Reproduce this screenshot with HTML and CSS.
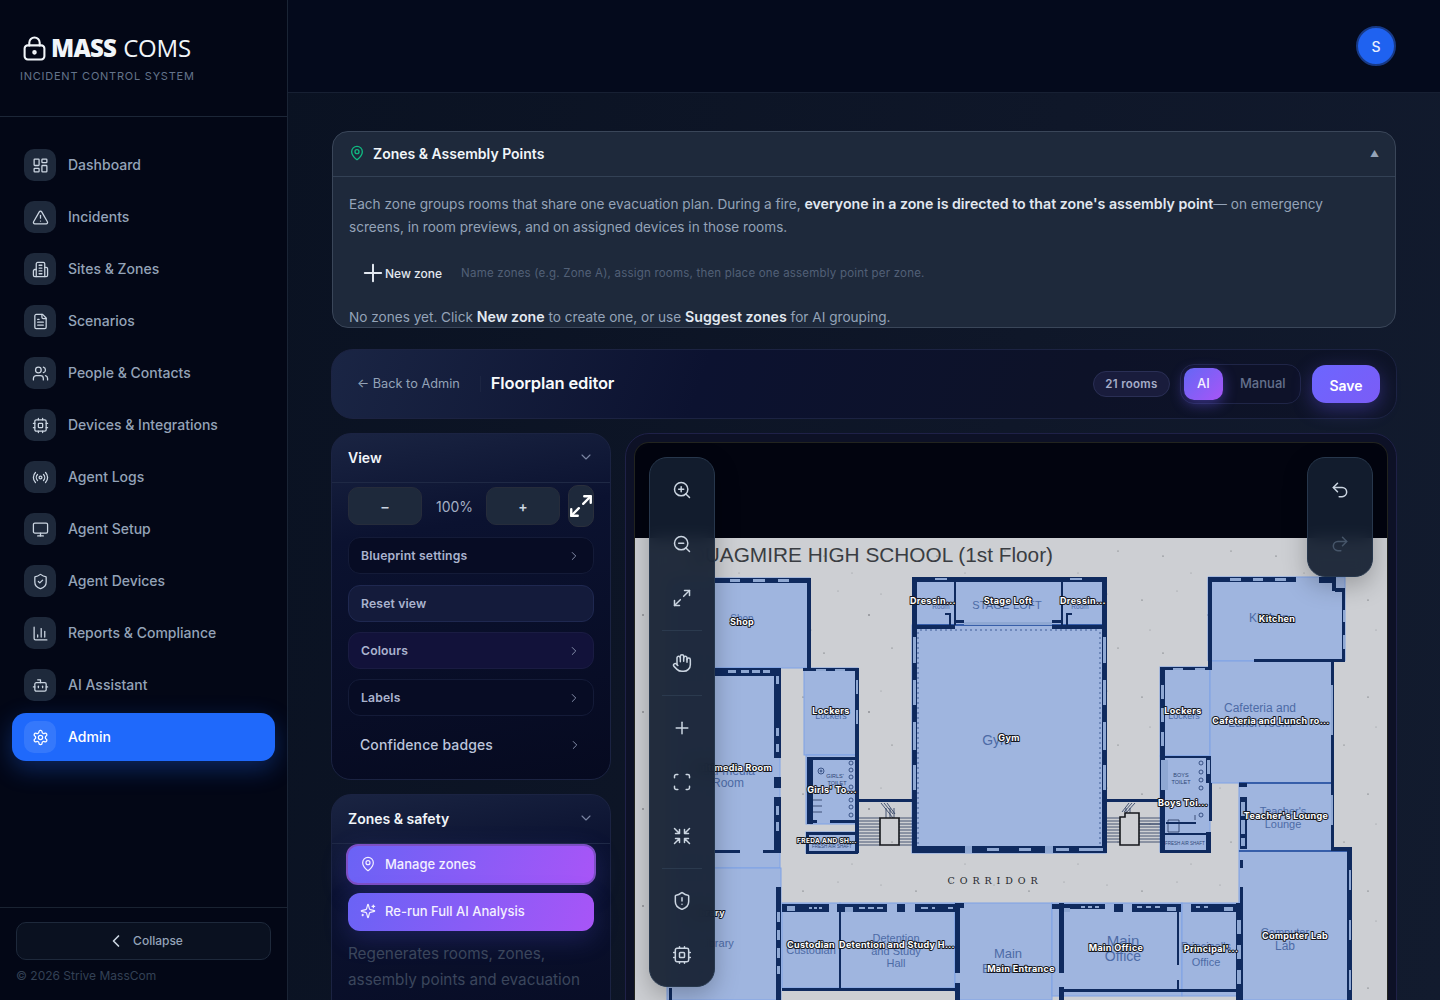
FILE: index.html
```html
<!DOCTYPE html>
<html lang="en">
<head>
<meta charset="utf-8">
<title>Floorplan editor</title>
<link rel="stylesheet" href="styles.css">
</head>
<body>
<svg class="sprite" aria-hidden="true">
<symbol id="i-dash" viewBox="0 0 24 24"><rect x="3" y="3" width="7" height="9" rx="1"/><rect x="14" y="3" width="7" height="5" rx="1"/><rect x="14" y="12" width="7" height="9" rx="1"/><rect x="3" y="16" width="7" height="5" rx="1"/></symbol>
<symbol id="i-alert" viewBox="0 0 24 24"><path d="m21.73 18-8-14a2 2 0 0 0-3.48 0l-8 14A2 2 0 0 0 4 21h16a2 2 0 0 0 1.73-3"/><path d="M12 9v4"/><path d="M12 17h.01"/></symbol>
<symbol id="i-build" viewBox="0 0 24 24"><path d="M6 22V4a2 2 0 0 1 2-2h8a2 2 0 0 1 2 2v18Z"/><path d="M6 12H4a2 2 0 0 0-2 2v6a2 2 0 0 0 2 2h2"/><path d="M18 9h2a2 2 0 0 1 2 2v9a2 2 0 0 1-2 2h-2"/><path d="M10 6h4"/><path d="M10 10h4"/><path d="M10 14h4"/><path d="M10 18h4"/></symbol>
<symbol id="i-file" viewBox="0 0 24 24"><path d="M15 2H6a2 2 0 0 0-2 2v16a2 2 0 0 0 2 2h12a2 2 0 0 0 2-2V7Z"/><path d="M14 2v4a2 2 0 0 0 2 2h4"/><path d="M10 9H8"/><path d="M16 13H8"/><path d="M16 17H8"/></symbol>
<symbol id="i-users" viewBox="0 0 24 24"><path d="M16 21v-2a4 4 0 0 0-4-4H6a4 4 0 0 0-4 4v2"/><circle cx="9" cy="7" r="4"/><path d="M22 21v-2a4 4 0 0 0-3-3.87"/><path d="M16 3.13a4 4 0 0 1 0 7.75"/></symbol>
<symbol id="i-cpu" viewBox="0 0 24 24"><rect x="4" y="4" width="16" height="16" rx="2"/><rect x="9" y="9" width="6" height="6" rx="1"/><path d="M15 2v2M15 20v2M2 15h2M2 9h2M20 15h2M20 9h2M9 2v2M9 20v2"/></symbol>
<symbol id="i-radio" viewBox="0 0 24 24"><path d="M4.9 19.1C1 15.2 1 8.8 4.9 4.9"/><path d="M7.8 16.2c-2.3-2.3-2.3-6.1 0-8.5"/><circle cx="12" cy="12" r="2"/><path d="M16.2 7.8c2.3 2.3 2.3 6.1 0 8.5"/><path d="M19.1 4.9C23 8.8 23 15.1 19.1 19"/></symbol>
<symbol id="i-monitor" viewBox="0 0 24 24"><rect x="2" y="3" width="20" height="14" rx="2"/><path d="M8 21h8"/><path d="M12 17v4"/></symbol>
<symbol id="i-shieldc" viewBox="0 0 24 24"><path d="M20 13c0 5-3.5 7.5-7.66 8.95a1 1 0 0 1-.67-.01C7.5 20.5 4 18 4 13V6a1 1 0 0 1 1-1c2 0 4.5-1.2 6.24-2.72a1.17 1.17 0 0 1 1.52 0C14.51 3.81 17 5 19 5a1 1 0 0 1 1 1z"/><path d="m9 12 2 2 4-4"/></symbol>
<symbol id="i-shielda" viewBox="0 0 24 24"><path d="M20 13c0 5-3.5 7.5-7.66 8.95a1 1 0 0 1-.67-.01C7.5 20.5 4 18 4 13V6a1 1 0 0 1 1-1c2 0 4.5-1.2 6.24-2.72a1.17 1.17 0 0 1 1.52 0C14.51 3.81 17 5 19 5a1 1 0 0 1 1 1z"/><path d="M12 8v4"/><path d="M12 16h.01"/></symbol>
<symbol id="i-chart" viewBox="0 0 24 24"><path d="M3 3v16a2 2 0 0 0 2 2h16"/><path d="M18 17V9"/><path d="M13 17V5"/><path d="M8 17v-3"/></symbol>
<symbol id="i-bot" viewBox="0 0 24 24"><path d="M12 8V4H8"/><rect x="4" y="8" width="16" height="12" rx="2"/><path d="M2 14h2"/><path d="M20 14h2"/><path d="M15 13v2"/><path d="M9 13v2"/></symbol>
<symbol id="i-gear" viewBox="0 0 24 24"><path d="M12.22 2h-.44a2 2 0 0 0-2 2v.18a2 2 0 0 1-1 1.73l-.43.25a2 2 0 0 1-2 0l-.15-.08a2 2 0 0 0-2.73.73l-.22.38a2 2 0 0 0 .73 2.73l.15.1a2 2 0 0 1 1 1.72v.51a2 2 0 0 1-1 1.74l-.15.09a2 2 0 0 0-.73 2.73l.22.38a2 2 0 0 0 2.73.73l.15-.08a2 2 0 0 1 2 0l.43.25a2 2 0 0 1 1 1.73V20a2 2 0 0 0 2 2h.44a2 2 0 0 0 2-2v-.18a2 2 0 0 1 1-1.73l.43-.25a2 2 0 0 1 2 0l.15.08a2 2 0 0 0 2.73-.73l.22-.39a2 2 0 0 0-.73-2.73l-.15-.08a2 2 0 0 1-1-1.74v-.5a2 2 0 0 1 1-1.74l.15-.09a2 2 0 0 0 .73-2.73l-.22-.38a2 2 0 0 0-2.73-.73l-.15.08a2 2 0 0 1-2 0l-.43-.25a2 2 0 0 1-1-1.73V4a2 2 0 0 0-2-2z"/><circle cx="12" cy="12" r="3"/></symbol>
<symbol id="i-pin" viewBox="0 0 24 24"><path d="M20 10c0 4.993-5.539 10.193-7.399 11.799a1 1 0 0 1-1.202 0C9.539 20.193 4 14.993 4 10a8 8 0 0 1 16 0"/><circle cx="12" cy="10" r="3"/></symbol>
<symbol id="i-plus" viewBox="0 0 24 24"><path d="M5 12h14"/><path d="M12 5v14"/></symbol>
<symbol id="i-expand" viewBox="0 0 24 24"><path d="M15 3h6v6"/><path d="m21 3-7 7"/><path d="m3 21 7-7"/><path d="M9 21H3v-6"/></symbol>
<symbol id="i-spark" viewBox="0 0 24 24"><path d="M9.937 15.5A2 2 0 0 0 8.5 14.063l-6.135-1.582a.5.5 0 0 1 0-.962L8.5 9.936A2 2 0 0 0 9.937 8.5l1.582-6.135a.5.5 0 0 1 .963 0L14.063 8.5A2 2 0 0 0 15.5 9.937l6.135 1.581a.5.5 0 0 1 0 .964L15.5 14.063a2 2 0 0 0-1.437 1.437l-1.582 6.135a.5.5 0 0 1-.963 0z"/><path d="M20 3v4"/><path d="M22 5h-4"/><path d="M4 17v2"/><path d="M5 18H3"/></symbol>
<symbol id="i-zin" viewBox="0 0 24 24"><circle cx="11" cy="11" r="8"/><path d="m21 21-4.3-4.3"/><path d="M11 8v6"/><path d="M8 11h6"/></symbol>
<symbol id="i-zout" viewBox="0 0 24 24"><circle cx="11" cy="11" r="8"/><path d="m21 21-4.3-4.3"/><path d="M8 11h6"/></symbol>
<symbol id="i-hand" viewBox="0 0 24 24"><path d="M18 11V6a2 2 0 0 0-2-2a2 2 0 0 0-2 2"/><path d="M14 10V4a2 2 0 0 0-2-2a2 2 0 0 0-2 2v2"/><path d="M10 10.5V6a2 2 0 0 0-2-2a2 2 0 0 0-2 2v8"/><path d="M18 8a2 2 0 1 1 4 0v6a8 8 0 0 1-8 8h-2c-2.8 0-4.5-.86-5.99-2.34l-3.6-3.6a2 2 0 0 1 2.83-2.82L7 15"/></symbol>
<symbol id="i-scan" viewBox="0 0 24 24"><path d="M3 7V5a2 2 0 0 1 2-2h2"/><path d="M17 3h2a2 2 0 0 1 2 2v2"/><path d="M21 17v2a2 2 0 0 1-2 2h-2"/><path d="M7 21H5a2 2 0 0 1-2-2v-2"/></symbol>
<symbol id="i-shrink" viewBox="0 0 24 24"><path d="m15 15 6 6m-6-6v4.8m0-4.8h4.8"/><path d="M9 19.8V15m0 0H4.2M9 15l-6 6"/><path d="M15 4.2V9m0 0h4.8M15 9l6-6"/><path d="M9 4.2V9m0 0H4.2M9 9 3 3"/></symbol>
<symbol id="i-undo" viewBox="0 0 24 24"><path d="M9 14 4 9l5-5"/><path d="M4 9h10.5a5.5 5.5 0 0 1 5.5 5.5a5.5 5.5 0 0 1-5.5 5.5H11"/></symbol>
<symbol id="i-redo" viewBox="0 0 24 24"><path d="m15 14 5-5-5-5"/><path d="M20 9H9.5A5.5 5.5 0 0 0 4 14.5A5.5 5.5 0 0 0 9.5 20H13"/></symbol>
<symbol id="i-lock" viewBox="0 0 24 24"><rect x="2.5" y="9" width="19" height="13.5" rx="3"/><path d="M7 9V6.5a5 5 0 0 1 10 0V9"/><circle cx="12" cy="15.7" r="1.2"/></symbol>
<symbol id="i-left" viewBox="0 0 24 24"><path d="m15 18-6-6 6-6"/></symbol>
<symbol id="i-right" viewBox="0 0 24 24"><path d="m9 18 6-6-6-6"/></symbol>
<symbol id="i-down" viewBox="0 0 24 24"><path d="m6 9 6 6 6-6"/></symbol>
</svg>

<div class="app">
  <aside class="sidebar">
    <div class="brand">
      <div class="logo">
        <svg class="ico logo-ico"><use href="#i-lock"/></svg>
        <span class="logo-text"><b>MASS</b> COMS</span>
      </div>
      <div class="tagline">INCIDENT CONTROL SYSTEM</div>
    </div>
    <nav class="nav">
      <a class="nav-item"><span class="tile"><svg class="ico"><use href="#i-dash"/></svg></span>Dashboard</a>
      <a class="nav-item"><span class="tile"><svg class="ico"><use href="#i-alert"/></svg></span>Incidents</a>
      <a class="nav-item"><span class="tile"><svg class="ico"><use href="#i-build"/></svg></span>Sites &amp; Zones</a>
      <a class="nav-item"><span class="tile"><svg class="ico"><use href="#i-file"/></svg></span>Scenarios</a>
      <a class="nav-item"><span class="tile"><svg class="ico"><use href="#i-users"/></svg></span>People &amp; Contacts</a>
      <a class="nav-item"><span class="tile"><svg class="ico"><use href="#i-cpu"/></svg></span>Devices &amp; Integrations</a>
      <a class="nav-item"><span class="tile"><svg class="ico"><use href="#i-radio"/></svg></span>Agent Logs</a>
      <a class="nav-item"><span class="tile"><svg class="ico"><use href="#i-monitor"/></svg></span>Agent Setup</a>
      <a class="nav-item"><span class="tile"><svg class="ico"><use href="#i-shieldc"/></svg></span>Agent Devices</a>
      <a class="nav-item"><span class="tile"><svg class="ico"><use href="#i-chart"/></svg></span>Reports &amp; Compliance</a>
      <a class="nav-item"><span class="tile"><svg class="ico"><use href="#i-bot"/></svg></span>AI Assistant</a>
      <a class="nav-item active"><span class="tile"><svg class="ico"><use href="#i-gear"/></svg></span>Admin</a>
    </nav>
    <div class="side-foot">
      <button class="collapse"><svg class="ico collapse-ico"><use href="#i-left"/></svg>Collapse</button>
      <div class="copy">© 2026 Strive MassCom</div>
    </div>
  </aside>

  <main class="main">
    <header class="topbar"><div class="avatar">S</div></header>
    <div class="content">
      <section class="zones">
        <div class="zones-head">
          <svg class="ico zones-pin"><use href="#i-pin"/></svg>
          <span class="zones-title">Zones &amp; Assembly Points</span>
          <span class="caret">▲</span>
        </div>
        <div class="zones-body">
          <p class="zones-intro">Each zone groups rooms that share one evacuation plan. During a fire, <strong>everyone in a zone is directed to that zone's assembly point</strong>— on emergency screens, in room previews, and on assigned devices in those rooms.</p>
          <div class="zones-actions">
            <button class="new-zone"><svg class="ico new-plus"><use href="#i-plus"/></svg>New zone</button>
            <span class="hint">Name zones (e.g. Zone A), assign rooms, then place one assembly point per zone.</span>
          </div>
          <p class="zones-empty">No zones yet. Click <strong>New zone</strong> to create one, or use <strong>Suggest zones</strong> for AI grouping.</p>
        </div>
      </section>

      <section class="editor-bar">
        <a class="back">← Back to Admin</a>
        <span class="bar-sep"></span>
        <h1 class="editor-title">Floorplan editor</h1>
        <span class="count">21 rooms</span>
        <div class="segment">
          <button class="seg-on">AI</button>
          <button class="seg-off">Manual</button>
        </div>
        <button class="save">Save</button>
      </section>

      <div class="split">
        <div class="controls">
          <section class="card view-card">
            <div class="card-head">View<svg class="ico card-chev"><use href="#i-down"/></svg></div>
            <div class="card-body">
              <div class="stepper">
                <button class="step">–</button>
                <span class="pct">100%</span>
                <button class="step">+</button>
                <button class="fit"><svg class="ico fit-ico"><use href="#i-expand"/></svg></button>
              </div>
              <button class="row row-first"><span>Blueprint settings</span><svg class="ico row-chev"><use href="#i-right"/></svg></button>
              <button class="row row-lit"><span>Reset view</span></button>
              <button class="row row-purple"><span>Colours</span><svg class="ico row-chev"><use href="#i-right"/></svg></button>
              <button class="row"><span>Labels</span><svg class="ico row-chev"><use href="#i-right"/></svg></button>
              <button class="row row-plain"><span>Confidence badges</span><svg class="ico row-chev"><use href="#i-right"/></svg></button>
            </div>
          </section>
          <section class="card safety-card">
            <div class="card-head">Zones &amp; safety<svg class="ico card-chev"><use href="#i-down"/></svg></div>
            <div class="card-body safety-body">
              <button class="cta cta-focus"><svg class="ico cta-ico"><use href="#i-pin"/></svg>Manage zones</button>
              <button class="cta"><svg class="ico cta-ico"><use href="#i-spark"/></svg>Re-run Full AI Analysis</button>
              <p class="safety-note">Regenerates rooms, zones, assembly points and evacuation</p>
            </div>
          </section>
        </div>

        <div class="canvas-wrap">
          <div class="stage">
            <svg class="plan" viewBox="635 538 752 462" width="752" height="462" xmlns="http://www.w3.org/2000/svg">
              <defs>
                <pattern id="speck" x="0" y="0" width="113" height="97" patternUnits="userSpaceOnUse">
                  <circle cx="12" cy="18" r=".6"/><circle cx="47" cy="9" r=".4"/><circle cx="78" cy="33" r=".7"/><circle cx="101" cy="66" r=".5"/><circle cx="33" cy="71" r=".6"/><circle cx="61" cy="88" r=".4"/><circle cx="90" cy="12" r=".4"/><circle cx="20" cy="48" r=".4"/>
                </pattern>
              </defs>
              <rect class="paper" x="635" y="538" width="752" height="462"/>
              <rect class="specks" x="635" y="538" width="752" height="462"/>
              <text class="title" x="1053" y="562">QUAGMIRE HIGH SCHOOL (1st Floor)</text>
              <text class="corridor" x="995" y="884">CORRIDOR</text>

              <g class="rooms">
                <rect x="667" y="578" width="143" height="90"/>
                <rect x="667" y="668" width="113" height="200"/>
                <rect x="667" y="868" width="114" height="132"/>
                <rect x="804" y="668" width="54" height="87"/>
                <rect x="806" y="755" width="52" height="69"/>
                <rect x="806" y="832" width="52" height="21"/>
                <rect x="914" y="578" width="41" height="47"/>
                <rect x="955" y="578" width="107" height="47"/>
                <rect x="1062" y="578" width="44" height="47"/>
                <rect x="912" y="625" width="194" height="228"/>
                <path d="M1208 577H1345V661H1208Z"/>
                <rect x="1160" y="667" width="50" height="89"/>
                <rect x="1210" y="661" width="123" height="122"/>
                <rect x="1160" y="756" width="50" height="96"/>
                <rect x="1239" y="783" width="94" height="68"/>
                <rect x="1239" y="851" width="112" height="149"/>
                <rect x="782" y="903" width="58" height="85"/>
                <rect x="840" y="903" width="115" height="85"/>
                <rect x="955" y="903" width="97" height="97"/>
                <rect x="1052" y="903" width="130" height="93"/>
                <rect x="1182" y="903" width="57" height="93"/>
              </g>

              <g class="thin">
                <path d="M914 625H1106M955 580V623M1062 580V623M1239 783H1333M1239 851H1351M840 906V988"/>
              </g>
              <path class="dots" d="M920 630H1098M918 632V845M1100 632V845"/>
              <g class="fx">
                <path d="M858 818H880M858 821H880M858 824H880M858 827H880M858 830H880M858 833H880M858 836H880M858 839H880M858 842H880M858 845H880M899 818H913M899 821H913M899 824H913M899 827H913M899 830H913M899 833H913M899 836H913M899 839H913M899 842H913M899 845H913"/>
                <path d="M1106 818H1120M1106 821H1120M1106 824H1120M1106 827H1120M1106 830H1120M1106 833H1120M1106 836H1120M1106 839H1120M1106 842H1120M1139 818H1160M1139 821H1160M1139 824H1160M1139 824H1160M1139 827H1160M1139 830H1160M1139 833H1160M1139 836H1160M1139 839H1160M1139 842H1160"/>
                <path d="M881 803L893 818M884 803L893 814M887 803L895 814M1135 803L1126 813M1132 803L1124 812M1129 803L1122 812"/>
                <path d="M886 808V818M890 808V818M894 808V818M1130 808V813M1126 808V813"/>
                <circle cx="821" cy="771" r="3"/><circle cx="821" cy="771" r="1"/>
                <circle cx="851" cy="763" r="2"/><circle cx="851" cy="770" r="2"/><circle cx="851" cy="777" r="2"/><circle cx="851" cy="787" r="2"/><circle cx="851" cy="800" r="2"/><circle cx="851" cy="807" r="2"/><circle cx="851" cy="815" r="2"/>
                <circle cx="1201" cy="763" r="2"/><circle cx="1201" cy="772" r="2"/><circle cx="1201" cy="780" r="2"/><circle cx="1201" cy="788" r="2"/><circle cx="1201" cy="815" r="2"/>
                <path d="M812 800H822M812 806H822M812 812H822M835 822H842M1195 815V820M1168 820H1179V832H1168Z"/>
              </g>
              <path class="box" d="M880 818H899V845H880ZM1120 835V845H1139V813H1125V817H1120Z"/>

              <g class="wall">
                <rect x="715" y="578" width="96" height="5"/><rect x="807" y="578" width="4" height="92"/>
                <rect x="715" y="668" width="66" height="8"/>
                <rect x="774" y="668" width="7" height="90"/><rect x="774" y="777" width="7" height="11"/><rect x="774" y="797" width="7" height="56"/>
                <rect x="715" y="850" width="25" height="3"/><rect x="763" y="850" width="18" height="3"/>
                <rect x="803" y="668" width="55" height="3"/><rect x="855" y="668" width="4" height="185"/>
                <rect x="807" y="757" width="6" height="67"/><rect x="807" y="757" width="50" height="3"/>
                <rect x="807" y="820" width="10" height="3"/><rect x="830" y="820" width="26" height="3"/>
                <rect x="806" y="832" width="50" height="3"/><rect x="806" y="832" width="3" height="21"/><rect x="806" y="851" width="52" height="3"/>
                <rect x="858" y="799" width="56" height="3"/>
                <rect x="912" y="577" width="194" height="5"/><rect x="912" y="577" width="5" height="276"/><rect x="1102" y="577" width="5" height="276"/>
                <rect x="954" y="580" width="2" height="45"/><rect x="1061" y="580" width="2" height="45"/>
                <rect x="912" y="625" width="43" height="4"/><rect x="1052" y="625" width="54" height="4"/><rect x="955" y="620" width="9" height="3"/><rect x="1052" y="620" width="10" height="3"/>
                <rect x="949" y="613" width="2" height="12"/><rect x="945" y="613" width="6" height="2"/><rect x="1066" y="613" width="2" height="12"/><rect x="1066" y="613" width="6" height="2"/>
                <rect x="912" y="846" width="194" height="7"/>
                <rect x="1106" y="799" width="54" height="3"/>
                <rect x="1208" y="577" width="4" height="90"/><rect x="1208" y="577" width="88" height="5"/><rect x="1319" y="577" width="15" height="6"/><rect x="1332" y="577" width="4" height="14"/><rect x="1335" y="588" width="9" height="4"/><rect x="1342" y="588" width="3" height="73"/>
                <rect x="1254" y="659" width="91" height="3"/>
                <rect x="1160" y="667" width="52" height="3"/><rect x="1160" y="667" width="5" height="186"/>
                <rect x="1160" y="756" width="51" height="2"/><rect x="1206" y="756" width="5" height="27"/><rect x="1209" y="783" width="3" height="38"/><rect x="1206" y="832" width="5" height="21"/>
                <rect x="1160" y="833" width="50" height="2"/><rect x="1160" y="850" width="51" height="3"/><rect x="1166" y="822" width="30" height="2"/>
                <rect x="1331" y="661" width="3" height="190"/><rect x="1331" y="847" width="20" height="4"/><rect x="1347" y="847" width="5" height="153"/>
                <rect x="1239" y="783" width="8" height="4"/><rect x="1240" y="797" width="7" height="52"/><rect x="1240" y="860" width="3" height="8"/><rect x="1240" y="887" width="3" height="16"/><rect x="1236" y="903" width="7" height="97"/>
                <rect x="782" y="904" width="47" height="8"/><rect x="837" y="904" width="50" height="8"/><rect x="897" y="904" width="8" height="8"/><rect x="915" y="904" width="40" height="8"/>
                <rect x="955" y="903" width="5" height="70"/><rect x="960" y="903" width="4" height="5"/><rect x="955" y="983" width="5" height="17"/>
                <rect x="1059" y="903" width="5" height="70"/><rect x="1059" y="987" width="5" height="13"/><rect x="1052" y="904" width="53" height="5"/><rect x="1114" y="904" width="9" height="8"/><rect x="1132" y="904" width="49" height="8"/><rect x="1191" y="904" width="48" height="8"/>
                <rect x="1177" y="910" width="2" height="55"/><rect x="1177" y="980" width="2" height="10"/><rect x="1064" y="989" width="176" height="3"/>
                <rect x="776" y="887" width="5" height="113"/><rect x="669" y="988" width="3" height="12"/><rect x="839" y="910" width="2" height="78"/>
                <rect x="782" y="988" width="173" height="3"/>
              </g>
              <rect class="paper" x="782" y="992" width="173" height="8"/>
              <g class="win">
                <rect x="730" y="579" width="10" height="3"/><rect x="753" y="579" width="12" height="3"/><rect x="778" y="579" width="11" height="3"/>
                <rect x="728" y="670" width="8" height="3"/><rect x="741" y="670" width="8" height="3"/><rect x="752" y="670" width="8" height="3"/><rect x="763" y="670" width="7" height="3"/>
                <rect x="776" y="676" width="3" height="8"/><rect x="776" y="728" width="3" height="8"/><rect x="776" y="744" width="3" height="8"/><rect x="776" y="806" width="3" height="9"/><rect x="776" y="822" width="3" height="9"/>
                <rect x="816" y="669" width="10" height="2"/><rect x="835" y="669" width="10" height="2"/>
                <rect x="856" y="680" width="2" height="14"/><rect x="856" y="710" width="2" height="14"/>
                <rect x="913" y="637" width="3" height="26"/><rect x="913" y="680" width="3" height="25"/><rect x="913" y="722" width="3" height="28"/><rect x="913" y="765" width="3" height="25"/>
                <rect x="1103" y="637" width="3" height="26"/><rect x="1103" y="680" width="3" height="25"/><rect x="1103" y="722" width="3" height="28"/><rect x="1103" y="765" width="3" height="25"/>
                <rect x="987" y="848" width="12" height="3"/><rect x="1019" y="848" width="12" height="3"/><rect x="1056" y="848" width="13" height="3"/><rect x="1079" y="848" width="24" height="3"/>
                <rect x="965" y="846" width="7" height="7"/><rect x="1045" y="846" width="8" height="7"/>
                <rect x="935" y="578" width="12" height="2"/><rect x="1070" y="578" width="12" height="2"/><rect x="964" y="622" width="88" height="3"/>
                <rect x="1230" y="578" width="11" height="3"/><rect x="1253" y="578" width="10" height="3"/><rect x="1275" y="578" width="11" height="3"/>
                <rect x="1343" y="610" width="2" height="12"/><rect x="1343" y="635" width="2" height="14"/>
                <rect x="1173" y="668" width="10" height="2"/><rect x="1195" y="668" width="10" height="2"/>
                <rect x="1161" y="685" width="3" height="14"/><rect x="1161" y="708" width="3" height="14"/><rect x="1161" y="732" width="3" height="14"/>
                <rect x="1161" y="760" width="7" height="30"/>
                <rect x="1207" y="760" width="3" height="14"/><rect x="1241" y="802" width="4" height="14"/><rect x="1241" y="820" width="4" height="14"/><rect x="1241" y="838" width="4" height="8"/>
                <rect x="1331" y="685" width="2" height="50"/><rect x="1331" y="795" width="2" height="30"/>
                <rect x="1349" y="870" width="2" height="20"/><rect x="1349" y="920" width="2" height="20"/><rect x="1349" y="970" width="2" height="20"/>
                <rect x="1237" y="920" width="4" height="14"/><rect x="1237" y="945" width="4" height="14"/><rect x="1237" y="970" width="4" height="14"/>
                <rect x="787" y="906" width="8" height="5"/><rect x="809" y="907" width="3" height="2"/><rect x="814" y="907" width="3" height="2"/><rect x="819" y="907" width="3" height="2"/>
                <rect x="845" y="907" width="8" height="5"/><rect x="859" y="907" width="6" height="2"/><rect x="868" y="907" width="6" height="2"/><rect x="877" y="907" width="6" height="2"/>
                <rect x="921" y="907" width="7" height="2"/><rect x="932" y="907" width="3" height="2"/><rect x="948" y="907" width="5" height="2"/>
                <rect x="1064" y="908" width="6" height="4"/><rect x="1081" y="906" width="4" height="2"/><rect x="1088" y="906" width="4" height="2"/><rect x="1095" y="906" width="4" height="2"/>
                <rect x="1137" y="906" width="5" height="2"/><rect x="1146" y="906" width="5" height="2"/><rect x="1155" y="906" width="5" height="2"/><rect x="1167" y="907" width="9" height="4"/>
                <rect x="1196" y="906" width="4" height="2"/><rect x="1204" y="906" width="4" height="2"/><rect x="1224" y="907" width="9" height="4"/>
                <rect x="777" y="912" width="3" height="10"/><rect x="777" y="930" width="3" height="10"/><rect x="777" y="948" width="3" height="10"/><rect x="777" y="966" width="3" height="8"/>
              </g>

              <g class="sub">
                <text class="s9" x="831" y="719">Lockers</text><text class="s9" x="1184" y="719">Lockers</text>
                <text class="s7" x="941" y="609">Room</text><text class="s7" x="1080" y="609">Room</text>
                <text class="s6 dark" x="835" y="778">GIRLS'</text><text class="s6 dark" x="837" y="785">TOILET</text>
                <text class="s6 dark" x="1181" y="777">BOYS</text><text class="s6 dark" x="1181" y="784">TOILET</text>
                <text class="s5 dark" x="1185" y="845">FRESH AIR SHAFT</text><text class="s5 dark" x="832" y="848">FRESH AIR SHAFT</text>
                <text class="s16 wide" x="1007" y="609">STAGE LOFT</text>
                <text class="s10" x="742" y="622">Shop</text><text class="s14" x="997" y="745">Gym</text><text class="s12" x="1269" y="622">Kitchen</text>
                <text class="s12" x="1260" y="712">Cafeteria and</text><text class="s12" x="1260" y="727">Lunch room</text>
                <text class="s12" x="724" y="775">Multi-media</text><text class="s12" x="728" y="787">Room</text>
                <text class="s11" x="1283" y="815">Teacher's</text><text class="s11" x="1283" y="828">Lounge</text>
                <text class="s11" x="1285" y="936">Computer</text><text class="s12" x="1285" y="950">Lab</text>
                <text class="s15" x="1123" y="946">Main</text><text class="s14" x="1123" y="961">Office</text>
                <text class="s11" x="1206" y="950">Principal's</text><text class="s11" x="1206" y="966">Office</text>
                <text class="s13" x="1008" y="958">Main</text><text class="s13" x="1008" y="973">Entrance</text>
                <text class="s11" x="896" y="942">Detention</text><text class="s11" x="896" y="955">and Study</text><text class="s11" x="896" y="967">Hall</text>
                <text class="s11" x="811" y="954">Custodian</text><text class="s11" x="717" y="947">Library</text>
              </g>

              <g class="labels">
                <text x="742" y="625">Shop</text><text x="933" y="604">Dressin...</text><text x="1008" y="604">Stage Loft</text><text x="1083" y="604">Dressin...</text>
                <text x="1277" y="622">Kitchen</text><text x="831" y="714">Lockers</text><text x="1183" y="714">Lockers</text><text x="1009" y="741">Gym</text>
                <text x="1271" y="724">Cafeteria and Lunch ro...</text><text class="lb-end" x="772" y="771">Multimedia Room</text><text x="832" y="793">Girls' To...</text>
                <text x="1183" y="806">Boys Toi...</text><text x="1286" y="819">Teacher's Lounge</text><text class="lb-small" x="827" y="843">FREDA AND SH...</text><text class="lb-end" x="725" y="916">Library</text>
                <text x="811" y="948">Custodian</text><text x="897" y="948">Detention and Study H...</text><text x="1116" y="951">Main Office</text><text x="1211" y="952">Principal'...</text>
                <text x="1295" y="939">Computer Lab</text><text x="1021" y="972">Main Entrance</text>
              </g>
            </svg>
            <div class="tools tools-left">
              <button class="tool"><svg class="ico"><use href="#i-zin"/></svg></button>
              <button class="tool"><svg class="ico"><use href="#i-zout"/></svg></button>
              <button class="tool"><svg class="ico"><use href="#i-expand"/></svg></button>
              <span class="tool-sep"></span>
              <button class="tool"><svg class="ico"><use href="#i-hand"/></svg></button>
              <span class="tool-sep"></span>
              <button class="tool"><svg class="ico"><use href="#i-plus"/></svg></button>
              <button class="tool"><svg class="ico"><use href="#i-scan"/></svg></button>
              <button class="tool"><svg class="ico"><use href="#i-shrink"/></svg></button>
              <span class="tool-sep"></span>
              <button class="tool"><svg class="ico"><use href="#i-shielda"/></svg></button>
              <button class="tool"><svg class="ico"><use href="#i-cpu"/></svg></button>
            </div>
            <div class="tools tools-right">
              <button class="tool"><svg class="ico"><use href="#i-undo"/></svg></button>
              <button class="tool tool-off"><svg class="ico"><use href="#i-redo"/></svg></button>
            </div>
          </div>
        </div>
      </div>
    </div>
  </main>
</div>
</body>
</html>
```
FILE: styles.css
```css
* { box-sizing: border-box; }
html, body { margin: 0; height: 100%; overflow: hidden; }
body { background: #020617; font-family: Inter, "Liberation Sans", sans-serif; color: #e2e8f0; }
button { font: inherit; color: inherit; background: none; border: 0; padding: 0; }
.sprite { display: none; }
.ico { width: 18px; height: 18px; fill: none; stroke: currentColor; stroke-width: 2; stroke-linecap: round; stroke-linejoin: round; flex: none; display: block; }
.app { display: flex; width: 1440px; height: 1000px; overflow: hidden; }

/* sidebar */
.sidebar { width: 288px; flex: none; height: 1000px; display: flex; flex-direction: column; background: #030716; border-right: 1px solid #1a2435; }
.brand { height: 117px; flex: none; padding: 33px 0 0 20px; border-bottom: 1px solid #1c2637; }
.logo { display: flex; align-items: center; gap: 4px; padding-left: 2px; height: 30px; color: #f1f5f9; }
.logo-ico { width: 25px; height: 25px; stroke-width: 2; }
.logo-text { font-family: "Open Sans", sans-serif; font-size: 24px; line-height: 30px; font-weight: 400; letter-spacing: -.2px; }
.logo-text b { font-weight: 800; letter-spacing: -.8px; margin-right: 1px; }
.tagline { margin-top: 6px; font-size: 11px; line-height: 14px; letter-spacing: .76px; color: #64748b; }
.nav { display: flex; flex-direction: column; gap: 4px; padding: 24px 12px 0; }
.nav-item { height: 48px; display: flex; align-items: center; gap: 12px; padding: 0 0 2px 12px; border-radius: 14px; font-size: 14px; font-weight: 500; color: #94a3b8; }
.tile { width: 32px; height: 32px; margin-top: 2px; border-radius: 10px; background: #1e293b; color: #cbd5e1; display: flex; align-items: center; justify-content: center; }
.tile .ico { width: 17px; height: 17px; stroke-width: 1.8; }
.active { background: #1f69fb; color: #fff; box-shadow: 0 8px 24px rgba(31, 105, 251, .32); }
.active .tile { background: rgba(255, 255, 255, .1); color: #fff; }
.side-foot { margin-top: auto; border-top: 1px solid #1a2332; padding: 14px 16px 0; height: 93px; }
.collapse { width: 255px; height: 38px; display: flex; align-items: center; justify-content: center; gap: 7px; padding: 0 0 2px 2px; background: #0a1120; border: 1px solid #1e293b; border-radius: 10px; font-size: 12px; font-weight: 500; color: #94a3b8; }
.collapse-ico { width: 20px; height: 20px; margin-top: 2px; color: #cbd5e1; }
.copy { margin-top: 8px; font-size: 12px; line-height: 16px; color: #334155; }

/* main */
.main { flex: 1; min-width: 0; display: flex; flex-direction: column; background: linear-gradient(100deg, #0a1222, #0f1729 60%, #121b2e); }
.topbar { height: 93px; flex: none; display: flex; align-items: center; justify-content: flex-end; padding: 0 44px 0 0; background: #040a1c; border-bottom: 1px solid #172033; }
.avatar { width: 40px; height: 40px; border-radius: 50%; background: #1f62f0; border: 2px solid #183a86; display: flex; align-items: center; justify-content: center; font-size: 14px; font-weight: 500; color: #e8efff; }
.content { padding: 38px 43px 0; flex: 1; min-height: 0; }

/* zones */
.zones { margin: 0 1px; height: 197px; background: #1e293b; border: 1px solid #3a4659; border-radius: 16px; overflow: hidden; }
.zones-head { height: 45px; display: flex; align-items: center; padding: 0 16px 2px; border-bottom: 1px solid #334155; }
.zones-pin { width: 16px; height: 16px; color: #10b981; }
.zones-title { margin-left: 8px; font-size: 14px; font-weight: 600; color: #f1f5f9; }
.caret { margin-left: auto; font-size: 9px; color: #94a3b8; }
.zones-body { padding: 15px 16px 0; font-size: 13.6px; line-height: 23px; color: #94a3b8; }
.zones-body p { margin: 0; }
.zones-body strong { color: #e2e8f0; font-size: 14.2px; font-weight: 600; }
.zones-actions { display: flex; align-items: center; margin-top: 12px; height: 44px; padding-left: 14px; }
.new-zone { display: flex; align-items: center; gap: 2px; font-size: 12px; font-weight: 500; color: #e2e8f0; }
.new-plus { width: 28px; height: 28px; margin: 0 -4px; stroke-width: 1.7; }
.hint { margin-left: 19px; font-size: 11.5px; letter-spacing: .2px; color: #526077; }
.zones-body .zones-empty { margin-top: 10px; }

/* editor bar */
.editor-bar { margin-top: 21px; height: 70px; display: flex; align-items: center; padding: 0 16px 0 25px; border-radius: 22px; border: 1px solid #1c2342; background: linear-gradient(110deg, #1a2544, #0c1230 35%, #0d1228 70%, #0e1427); }
.back { margin-bottom: 2px; font-size: 12.75px; font-weight: 400; color: #94a3b8; }
.bar-sep { width: 1px; height: 16px; margin: 0 10px 0 20px; background: #1c2542; }
.editor-title { margin: 0 0 2px; font-size: 16.5px; line-height: 24px; font-weight: 600; letter-spacing: -.15px; color: #f8fafc; }
.count { margin-left: auto; width: 77px; justify-content: center; height: 26px; display: flex; align-items: center; border-radius: 13px; border: 1px solid #2a2f55; background: #191c3c; font-size: 11.5px; font-weight: 600; letter-spacing: .3px; color: #a5adc9; }
.segment { margin-left: 10px; width: 121px; height: 40px; padding: 3px; display: flex; align-items: center; gap: 17px; border-radius: 14px; border: 1px solid #1f2547; background: #0e1229; }
.seg-on { width: 39px; height: 32px; padding-bottom: 2px; border-radius: 10px; background: linear-gradient(135deg, #6467f5, #a855f7); box-shadow: 0 4px 14px rgba(110, 90, 250, .45); font-size: 13px; font-weight: 500; color: #f4f2ff; }
.seg-off { height: 32px; padding-bottom: 2px; font-size: 13px; font-weight: 500; color: #64708c; }
.save { margin-left: 11px; width: 68px; height: 38px; border-radius: 14px; background: linear-gradient(135deg, #6c66ff, #7b5cf6); box-shadow: 0 6px 20px rgba(105, 90, 250, .35); font-size: 14px; font-weight: 600; color: #fff; padding-top: 2px; }

/* columns */
.split { margin-top: 14px; display: flex; gap: 14px; align-items: flex-start; }
.controls { width: 280px; flex: none; display: flex; flex-direction: column; gap: 14px; }
.card { border: 1px solid #1b2342; border-radius: 20px; background: linear-gradient(170deg, #1a2442, #0b1230 28%, #060a20); }
.view-card { height: 347px; }
.safety-card { height: 300px; }
.card-head { height: 49px; display: flex; align-items: center; justify-content: space-between; padding: 0 16px 2px; border-bottom: 1px solid #1f2945; font-size: 14px; font-weight: 600; color: #f1f5f9; }
.card-chev { width: 16px; height: 16px; color: #7b86a3; stroke-width: 1.6; }
.card-body { padding: 2px 16px 0; display: flex; flex-direction: column; gap: 10px; }
.stepper { display: flex; align-items: center; height: 42px; margin-bottom: 1px; }
.step { width: 74px; height: 38px; border-radius: 10px; background: #1e293b; border: 1px solid #262c3b; font-size: 14px; font-weight: 600; color: #cbd5e1; }
.pct { width: 64px; padding-left: 1px; text-align: center; font-size: 14px; color: #a3aec4; }
.fit { margin-left: 8px; width: 26px; height: 42px; border-radius: 10px; background: #1e293b; border: 1px solid #2a2f3c; display: flex; align-items: center; justify-content: center; color: #fff; }
.fit-ico { width: 26px; height: 26px; flex: none; stroke-width: 2.2; margin: 0 -1px; }
.row { height: 37px; display: flex; align-items: center; justify-content: space-between; padding: 0 12px; border-radius: 12px; border: 1px solid #141b38; background: #070c24; font-size: 12.2px; font-weight: 600; letter-spacing: .15px; color: #aab3ce; text-align: left; }
.row-first { margin-top: -1px; margin-bottom: 1px; }
.row-lit { background: #141b3b; border-color: #1f2850; }
.row-purple { background: #12123a; border-color: #1a1c42; }
.row-plain { background: none; border: 0; font-size: 14px; font-weight: 500; letter-spacing: .1px; color: #bcc5dc; }
.row-chev { width: 14px; height: 14px; color: #8b95b0; stroke-width: 1.6; }
.safety-body { padding-top: 0; gap: 8px; }
.cta { height: 38px; display: flex; align-items: center; gap: 9px; padding: 0 12px 2px; border-radius: 12px; background: linear-gradient(110deg, #6a63f5, #a855f7); box-shadow: 0 8px 26px rgba(90, 90, 240, .22); font-size: 13px; font-weight: 500; color: #f3f0ff; }
.cta-focus { height: 41px; margin: 0 -2px; padding: 0 12px 2px; border: 2px solid #7d4fc4; }
.cta-ico { width: 16px; height: 16px; stroke-width: 1.8; }
.safety-note { margin: 2px 0 0; font-size: 15.3px; line-height: 26px; color: #3b465c; }

/* canvas */
.canvas-wrap { flex: 1; min-width: 0; height: 640px; padding: 9px; border: 1px solid #1f2148; border-radius: 24px; background: #0d1126; }
.stage { position: relative; width: 752px; height: 640px; padding-top: 95px; background: #02040f; border-radius: 14px; box-shadow: 0 0 0 1px #22241f; overflow: hidden; }
.plan { display: block; background: #cdcfd3; }
.paper { fill: #cdcfd3; }
.specks { fill: url(#speck); }
#speck circle { fill: #4a4d52; }
.title { font-family: "Liberation Sans", sans-serif; font-size: 20.8px; text-anchor: end; fill: #3a3d42; }
.corridor { font-family: "DejaVu Serif", "Liberation Serif", serif; font-size: 9.5px; letter-spacing: 4.9px; text-anchor: middle; fill: #25282c; }
.rooms rect, .rooms path { fill: #9fb5df; stroke: #7fa2e6; stroke-width: 1; }
.thin path { fill: none; stroke: #1b4596; stroke-width: 1.5; }
.dots { fill: none; stroke: #3f5d97; stroke-width: 1; stroke-dasharray: 2 3; }
.fx path { fill: none; stroke: #23365c; stroke-width: .8; }
.fx circle { fill: none; stroke: #1f3a6e; stroke-width: .8; }
.box { fill: none; stroke: #15171c; stroke-width: 1.6; }
.wall rect { fill: #0f2a5e; }
.win rect { fill: #8fa8d3; }
.sub text { font-family: "Liberation Sans", sans-serif; fill: #4d6ba6; text-anchor: middle; }
.s5 { font-size: 4.5px; }
.s6 { font-size: 5.5px; }
.s7 { font-size: 6.5px; }
.s9 { font-size: 9px; }
.s10 { font-size: 10px; }
.s11 { font-size: 11px; }
.s12 { font-size: 12px; }
.s13 { font-size: 13px; }
.s14 { font-size: 14px; }
.s15 { font-size: 15px; }
.s16 { font-size: 11px; }
.wide { letter-spacing: .2px; }
.sub .dark { fill: #2e4676; }
.labels text { font-family: Inter, "Liberation Sans", sans-serif; font-size: 9px; font-weight: 700; letter-spacing: .35px; text-anchor: middle; fill: #fff; stroke: #15181f; stroke-width: 2; paint-order: stroke; stroke-linejoin: round; }
.labels .lb-end { text-anchor: end; }
.labels .lb-small { font-size: 6.5px; }
.tools { position: absolute; top: 14px; width: 66px; display: flex; flex-direction: column; align-items: center; padding: 5px 0; border: 1px solid #27374c; border-radius: 18px; background: rgba(20, 30, 48, .92); backdrop-filter: blur(8px); box-shadow: 0 8px 24px rgba(0, 0, 0, .25); }
.tools-left { left: 14px; height: 530px; }
.tools-right { right: 14px; height: 120px; }
.tool { width: 40px; height: 54px; flex: none; display: flex; align-items: center; justify-content: center; color: #cbd5e1; }
.tool .ico { width: 20px; height: 20px; stroke-width: 1.8; }
.tool-off { color: #465569; }
.tool-sep { width: 40px; height: 1px; flex: none; background: #2b3a4e; margin: 5px 0; }
```
